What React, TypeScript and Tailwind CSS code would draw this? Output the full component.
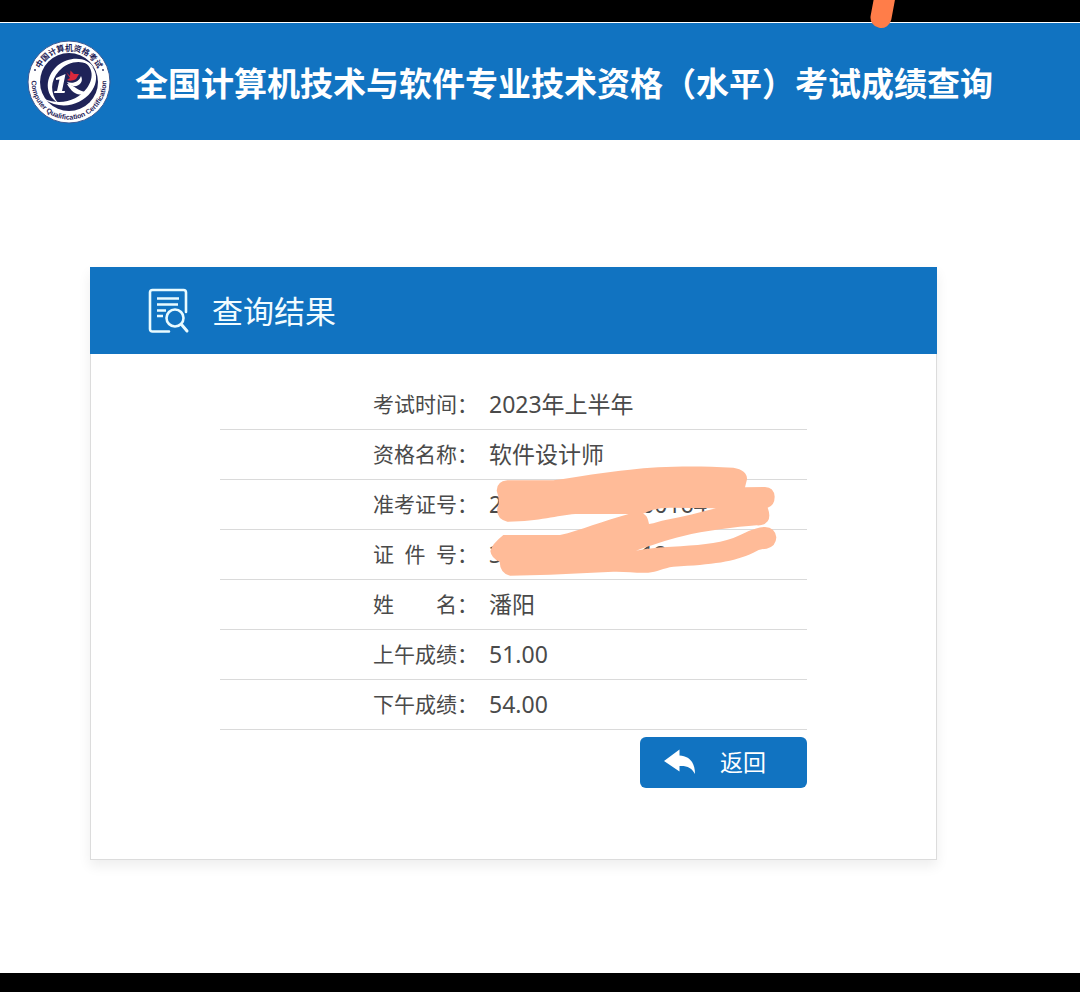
import type { ReactNode } from "react";

const NAVY = "#1f2358";

function Emblem() {
  return (
    <svg viewBox="0 0 84 84" className="size-[84px] shrink-0" role="img" aria-label="Computer Qualification Certification">
      <defs>
        <path id="arc-top" d="M10.500 42 A31.500 31.500 0 0 1 73.500 42" />
        <path id="arc-bottom" d="M7 29 A37.400 37.400 0 1 0 77 29" />
      </defs>
      <circle cx="42" cy="42" r="41" fill="#fff" stroke="#3c5a94" strokeWidth="1" />
      <circle cx="42" cy="42" r="29" fill={NAVY} />
      <text fontSize="8" fontWeight="700" fill={NAVY} fontFamily="'Noto Sans CJK SC', sans-serif" textAnchor="middle">
        <textPath href="#arc-top" startOffset="50%">中国计算机资格考试</textPath>
      </text>
      <text fontSize="7" fontWeight="700" fill={NAVY} fontFamily="'Liberation Sans', sans-serif" textAnchor="middle">
        <textPath href="#arc-bottom" startOffset="50%">Computer Qualification Certification</textPath>
      </text>
      <circle cx="8" cy="30" r="0.900" fill={NAVY} />
      <circle cx="76" cy="30" r="0.900" fill={NAVY} />
      <path d="M67 28 C61 17 43 15 30 26 C18 37 17 54 31 63 C23 53 23 41 32 31 C42 20 57 19 67 28Z" fill="#fff" />
      <path d="M52 20 C66 24 68 37 60 48 C51 60 35 66 17 59 C34 71 54 65 64 52 C74 39 69 22 52 20Z" fill="#fff" />
      <path d="M29 38 L38.500 34 L35 51 H38 L37.500 53 H27 L27.500 51 H30 L32.500 39.500 L29 40Z" fill="#fff" />
      <path d="M40 44 C47 44 50 52 61 52 C55 57 47 54 43.500 49 C42 47 41 46 40 44Z" fill="#fff" />
      <path d="M40 42 C46 44 52 42 54 36 C57 42 52 47 46 46 C43 45 41 44 40 42Z" fill="#fff" />
      <path d="M39 32 L43 36 L43.500 30.500 L47 34 L52 34 L49 39 C46 41 42 41 40 40 L43 38Z" fill="#d9283c" />
    </svg>
  );
}

function ResultIcon() {
  return (
    <svg viewBox="0 0 42 46" className="h-[46px] w-[42px] shrink-0" fill="none" stroke="#e9fbff" strokeWidth="2.600" strokeLinecap="round" aria-hidden="true">
      <path d="M21 43.500 H4.500 Q2 43.500 2 41 V4.500 Q2 2 4.500 2 H35.500 Q38 2 38 4.500 V24" />
      <path d="M9 10.500 H31 M9 16.500 H30 M9 22.500 H18 M9 28 H15" strokeLinecap="butt" />
      <circle cx="27" cy="30" r="8.500" />
      <path d="M33.500 36.500 L39 43" strokeWidth="3" />
    </svg>
  );
}

function BackIcon() {
  return (
    <svg viewBox="0 0 32 26" className="h-[26px] w-8 shrink-0" fill="#fff" aria-hidden="true">
      <path d="M0 12 L15.500 0.500 V6.500 C25 7 31 13 31 25 C28 19 23 16.500 15.500 17 V22.500Z" />
    </svg>
  );
}

function Scribble() {
  return (
    <svg viewBox="0 0 1050 420" className="pointer-events-none absolute left-[250px] top-[71px] h-[140px] w-[350px]" fill="#ffbb98" fillRule="evenodd" aria-hidden="true">
      <path
        d="M80 122 Q80 94 112 91 L250 91 C330 80 400 66 480 59 C560 50 660 46 790 53 Q832 60 831 88 L825 112 L885 111 Q912 112 914 140 Q914 166 893 173 Q903 200 893 214 Q882 228 860 226 C800 230 700 243 640 258 C590 270 540 287 498 302 C540 294 570 291 605 290 C680 286 740 282 790 264 C825 250 850 233 885 231 Q915 232 919 262 Q918 290 890 296 Q870 296 850 308 C790 336 730 343 610 350 C580 354 560 366 535 368 C500 370 470 364 430 365 L240 374 L120 377 Q90 370 89 335 Q64 325 61 303 Q66 282 100 255 L270 255 C330 242 400 212 476 192 L316 192 C260 196 210 214 112 215 Q78 206 82 175 Q92 155 80 122Z
           M519 191 C540 180 570 173 600 173 L738 175 C690 186 640 202 590 209 C570 213 555 219 537 222 C534 205 530 195 519 191Z"
      />
    </svg>
  );
}

const rows: { label: string; value: ReactNode }[] = [
  { label: "考试时间：", value: "2023年上半年" },
  { label: "资格名称：", value: "软件设计师" },
  {
    label: "准考证号：",
    value: (
      <span className="flex gap-[139px]">
        <span>2</span>
        <span>00164</span>
      </span>
    ),
  },
  {
    label: "证\u2002件\u2002号：",
    value: (
      <span className="flex gap-[139px]">
        <span>3</span>
        <span>12</span>
      </span>
    ),
  },
  { label: "姓\u2003\u2003名：", value: "潘阳" },
  { label: "上午成绩：", value: "51.00" },
  { label: "下午成绩：", value: "54.00" },
];

export default function App() {
  return (
    <div className="flex min-h-screen flex-col bg-white font-['Noto_Sans','Noto_Sans_CJK_SC',sans-serif] text-[#4a4a4a]">
      <div className="relative h-[22px] bg-black">
        <svg viewBox="0 0 30 30" className="absolute left-[868px] top-0 z-10 size-[30px]" aria-hidden="true">
          <path d="M17 -4 L13 17.500" stroke="#ff7d49" strokeWidth="21" strokeLinecap="round" />
        </svg>
      </div>
      <header className="mt-px flex h-[117px] items-center gap-6 bg-[#1173c1] pl-[27px]">
        <Emblem />
        <h1 className="whitespace-nowrap pt-1 text-[33px] font-bold leading-[48px] text-white">
          全国计算机技术与软件专业技术资格（水平）考试成绩查询
        </h1>
      </header>
      <main className="flex-1 pb-[113px] pl-[90px] pr-[143px] pt-[127px]">
        <section className="bg-white shadow-[0_6px_12px_rgba(0,0,0,0.07)]">
          <div className="flex h-[87px] items-center gap-[22px] bg-[#1173c1] pl-[58px]">
            <ResultIcon />
            <h2 className="text-[31px] leading-[44px] text-[#f2fcff]">查询结果</h2>
          </div>
          <div className="border border-t-0 border-[#dcdcdc] px-[129px] pb-[71px] pt-[25px]">
            <div className="relative">
              <table className="w-full border-collapse">
                <tbody>
                  {rows.map((row) => (
                    <tr key={row.label} className="h-[50px] border-b border-[#dadada]">
                      <th scope="row" className="w-[269px] whitespace-nowrap p-0 pl-[153px] text-left text-[21px] font-normal leading-[30px]">
                        {row.label}
                      </th>
                      <td className="whitespace-nowrap p-0 text-[23px] leading-[32px]">{row.value}</td>
                    </tr>
                  ))}
                </tbody>
              </table>
              <Scribble />
            </div>
            <div className="mt-[7px] flex justify-end">
              <button type="button" className="flex h-[51px] w-[167px] items-center gap-6 rounded-md bg-[#1173c1] pl-6 text-[23px] leading-[32px] text-white">
                <BackIcon />
                返回
              </button>
            </div>
          </div>
        </section>
      </main>
      <div className="h-[19px] bg-black" />
    </div>
  );
}
